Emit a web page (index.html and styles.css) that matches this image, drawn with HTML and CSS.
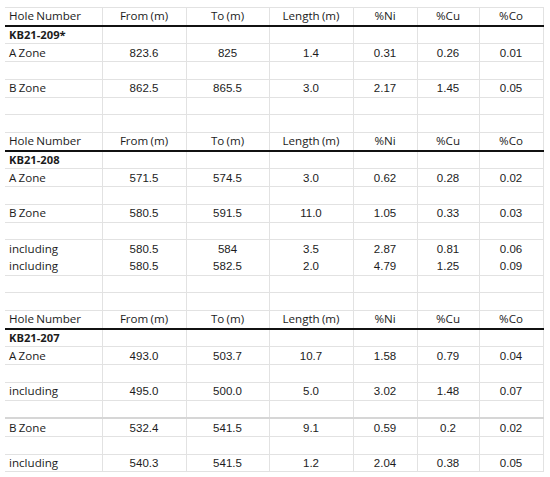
FILE: index.html
```html
<!DOCTYPE html>
<html>
<head>
<meta charset="utf-8">
<link rel="stylesheet" href="styles.css">
</head>
<body>
<table class="sheet">
  <colgroup>
    <col class="c1"><col class="c2"><col class="c3"><col class="c4"><col class="c5"><col class="c6"><col class="c7">
  </colgroup>
  <tbody>
    <tr class="head"><td>Hole Number</td><td>From (m)</td><td>To (m)</td><td>Length (m)</td><td>%Ni</td><td>%Cu</td><td>%Co</td></tr>
    <tr><td class="hole">KB21-209*</td><td></td><td></td><td></td><td></td><td></td><td></td></tr>
    <tr><td>A Zone</td><td class="n">823.6</td><td class="n">825</td><td class="n">1.4</td><td class="n">0.31</td><td class="n">0.26</td><td class="n">0.01</td></tr>
    <tr><td></td><td></td><td></td><td></td><td></td><td></td><td></td></tr>
    <tr><td>B Zone</td><td class="n">862.5</td><td class="n">865.5</td><td class="n">3.0</td><td class="n">2.17</td><td class="n">1.45</td><td class="n">0.05</td></tr>
    <tr><td></td><td></td><td></td><td></td><td></td><td></td><td></td></tr>
    <tr><td></td><td></td><td></td><td></td><td></td><td></td><td></td></tr>
    <tr class="head"><td>Hole Number</td><td>From (m)</td><td>To (m)</td><td>Length (m)</td><td>%Ni</td><td>%Cu</td><td>%Co</td></tr>
    <tr><td class="hole">KB21-208</td><td></td><td></td><td></td><td></td><td></td><td></td></tr>
    <tr><td>A Zone</td><td class="n">571.5</td><td class="n">574.5</td><td class="n">3.0</td><td class="n">0.62</td><td class="n">0.28</td><td class="n">0.02</td></tr>
    <tr><td></td><td></td><td></td><td></td><td></td><td></td><td></td></tr>
    <tr><td>B Zone</td><td class="n">580.5</td><td class="n">591.5</td><td class="n">11.0</td><td class="n">1.05</td><td class="n">0.33</td><td class="n">0.03</td></tr>
    <tr><td></td><td></td><td></td><td></td><td></td><td></td><td></td></tr>
    <tr class="nogrid"><td>including</td><td class="n">580.5</td><td class="n">584</td><td class="n">3.5</td><td class="n">2.87</td><td class="n">0.81</td><td class="n">0.06</td></tr>
    <tr><td>including</td><td class="n">580.5</td><td class="n">582.5</td><td class="n">2.0</td><td class="n">4.79</td><td class="n">1.25</td><td class="n">0.09</td></tr>
    <tr><td></td><td></td><td></td><td></td><td></td><td></td><td></td></tr>
    <tr><td></td><td></td><td></td><td></td><td></td><td></td><td></td></tr>
    <tr class="head"><td>Hole Number</td><td>From (m)</td><td>To (m)</td><td>Length (m)</td><td>%Ni</td><td>%Cu</td><td>%Co</td></tr>
    <tr><td class="hole">KB21-207</td><td></td><td></td><td></td><td></td><td></td><td></td></tr>
    <tr><td>A Zone</td><td class="n">493.0</td><td class="n">503.7</td><td class="n">10.7</td><td class="n">1.58</td><td class="n">0.79</td><td class="n">0.04</td></tr>
    <tr><td></td><td></td><td></td><td></td><td></td><td></td><td></td></tr>
    <tr><td>including</td><td class="n">495.0</td><td class="n">500.0</td><td class="n">5.0</td><td class="n">3.02</td><td class="n">1.48</td><td class="n">0.07</td></tr>
    <tr class="pre-thick"><td></td><td></td><td></td><td></td><td></td><td></td><td></td></tr>
    <tr><td>B Zone</td><td class="n">532.4</td><td class="n">541.5</td><td class="n">9.1</td><td class="n">0.59</td><td class="n">0.2</td><td class="n">0.02</td></tr>
    <tr><td></td><td></td><td></td><td></td><td></td><td></td><td></td></tr>
    <tr><td>including</td><td class="n">540.3</td><td class="n">541.5</td><td class="n">1.2</td><td class="n">2.04</td><td class="n">0.38</td><td class="n">0.05</td></tr>
  </tbody>
</table>
</body>
</html>
```

FILE: styles.css
```css
html, body {
  margin: 0;
  padding: 0;
  background: #ffffff;
}

body {
  padding: 7px 0 0 5px;
}

.sheet {
  border-collapse: collapse;
  table-layout: fixed;
  width: 538px;
  font-family: "Open Sans", "Liberation Sans", sans-serif;
  font-size: 11.6px;
  color: #1c1c1c;
  border-top: 1px solid #e2e2e2;
}

.c1 { width: 97px; }
.c2 { width: 84px; }
.c3 { width: 83px; }
.c4 { width: 84px; }
.c5 { width: 64px; }
.c6 { width: 62px; }
.c7 { width: 64px; }

.sheet tr {
  height: 17.73px;
}

.sheet td {
  padding: 0;
  height: 16.7px;
  line-height: 16px;
  border-bottom: 1px solid #e2e2e2;
  border-left: 1px solid #e2e2e2;
  border-right: 1px solid #e2e2e2;
  text-align: center;
  white-space: nowrap;
  overflow: hidden;
  vertical-align: middle;
  word-spacing: -0.8px;
}

.sheet td:first-child {
  text-align: left;
  padding-left: 4px;
  border-left: none;
}

.sheet .head td {
  border-bottom: 2px solid #111111;
}

.sheet .hole {
  font-weight: 700;
  font-size: 11.2px;
}

.sheet .n {
  font-family: "Liberation Sans", Arial, sans-serif;
  font-size: 11.5px;
}

.sheet .nogrid td {
  border-bottom-color: transparent;
}

.sheet .pre-thick td {
  border-bottom: 2px solid #d6d6d6;
}
```
